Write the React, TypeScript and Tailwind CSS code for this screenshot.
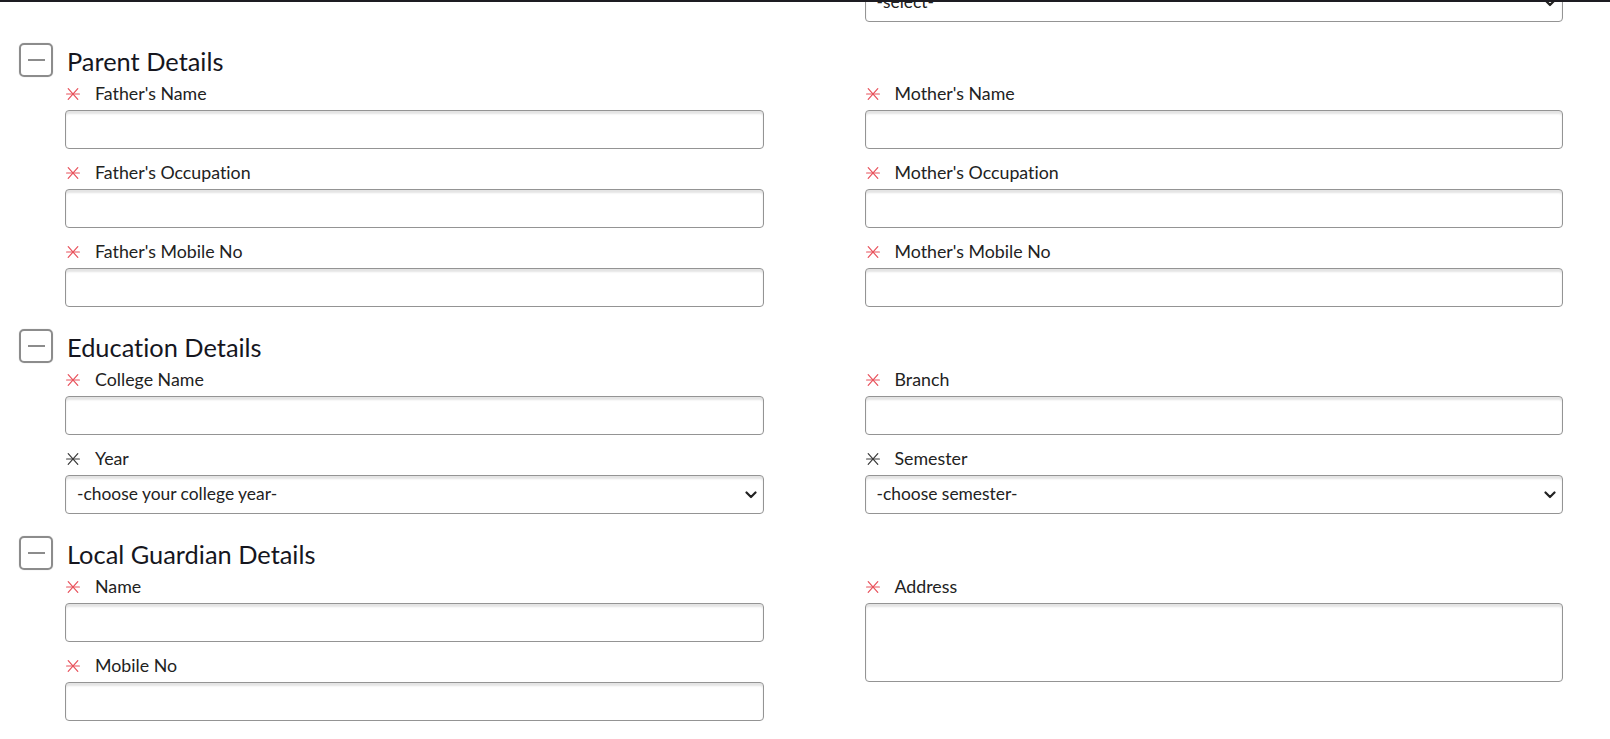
import React from "react";

type Field = {
  label: string;
  required?: boolean;
  kind?: "input" | "select" | "textarea";
  placeholder?: string;
};

function Star({ required = true }: { required?: boolean }) {
  return (
    <svg
      viewBox="0 0 14 14"
      className="w-[14px] h-[14px] shrink-0"
      stroke={required ? "#e8525c" : "#3a3a3a"}
      strokeWidth="1.2"
      strokeLinecap="round"
    >
      <line x1="0.6" y1="7" x2="13.4" y2="7" />
      <line x1="2.2" y1="1.6" x2="11.8" y2="12.4" />
      <line x1="11.8" y1="1.6" x2="2.2" y2="12.4" />
    </svg>
  );
}

function Chevron() {
  return (
    <svg
      viewBox="0 0 12 8"
      className="pointer-events-none absolute right-[7px] top-1/2 -translate-y-1/2 w-[12px] h-[8px]"
      fill="none"
      stroke="#222"
      strokeWidth="2.2"
      strokeLinecap="round"
      strokeLinejoin="round"
    >
      <path d="M1.5 1.5 6 6l4.5-4.5" />
    </svg>
  );
}

const boxBase =
  "w-full bg-white border border-[#949494] rounded-[4px] shadow-[inset_0_3px_2px_#e4e4e4] outline-none text-[#222] [font-variant-ligatures:none]";

function Control({ field }: { field: Field }) {
  if (field.kind === "select") {
    return (
      <div className="relative">
        <select
          className={`${boxBase} h-[39px] appearance-none pl-[11px] pr-8 text-[17.4px]`}
          defaultValue=""
        >
          <option value="">{field.placeholder}</option>
        </select>
        <Chevron />
      </div>
    );
  }
  if (field.kind === "textarea") {
    return <textarea className={`${boxBase} h-[79px] resize-none block text-[17.8px]`} />;
  }
  return <input type="text" className={`${boxBase} h-[39px] px-3 block text-[17.8px]`} />;
}

function FieldBlock({ field }: { field: Field }) {
  return (
    <div className="mb-[11px]">
      <label className="flex items-center h-[24px] pt-[1px] mb-[5px] text-[17.8px] text-[#222] [font-variant-ligatures:none]">
        <span className="ml-[1px] mr-[15px] flex items-center">
          <Star required={field.required !== false} />
        </span>
        {field.label}
      </label>
      <Control field={field} />
    </div>
  );
}

function SectionHeader({ title }: { title: string }) {
  return (
    <div className="flex items-center h-[34px] mb-[4px]">
      <div className="ml-[19px] w-[34px] h-[34px] rounded-[5px] border-2 border-[#8c8c8c] flex items-center justify-center shadow-[0_0_1px_#bbb]">
        <div className="w-[17px] h-[2px] bg-[#8c8c8c]" />
      </div>
      <h2 className="ml-[14px] text-[25.4px] leading-none text-[#16161e] mt-[3px] [font-variant-ligatures:none]">
        {title}
      </h2>
    </div>
  );
}

function Section({
  title,
  left,
  right,
}: {
  title: string;
  left: Field[];
  right: Field[];
}) {
  return (
    <section className="mt-[11px] first:mt-0">
      <SectionHeader title={title} />
      <div className="grid grid-cols-2 gap-x-[101px] pl-[65px] pr-[47px]">
        <div>
          {left.map((f) => (
            <FieldBlock key={f.label} field={f} />
          ))}
        </div>
        <div>
          {right.map((f) => (
            <FieldBlock key={f.label} field={f} />
          ))}
        </div>
      </div>
    </section>
  );
}

export default function App() {
  return (
    <div
      className="w-[1610px] h-[739px] overflow-hidden bg-white"
      style={{ fontFamily: "Lato, 'Noto Sans', sans-serif" }}
    >
      <div className="h-[2px] bg-[#1d1c22] relative z-10" />

      {/* tail of previous section, scrolled off the top */}
      <div className="grid grid-cols-2 gap-x-[101px] pl-[65px] pr-[47px] mt-[-19px] mb-[21px]">
        <div />
        <Control field={{ label: "", kind: "select", placeholder: "-select-" }} />
      </div>

      <Section
        title="Parent Details"
        left={[
          { label: "Father's Name" },
          { label: "Father's Occupation" },
          { label: "Father's Mobile No" },
        ]}
        right={[
          { label: "Mother's Name" },
          { label: "Mother's Occupation" },
          { label: "Mother's Mobile No" },
        ]}
      />
      <Section
        title="Education Details"
        left={[
          { label: "College Name" },
          {
            label: "Year",
            required: false,
            kind: "select",
            placeholder: "-choose your college year-",
          },
        ]}
        right={[
          { label: "Branch" },
          {
            label: "Semester",
            required: false,
            kind: "select",
            placeholder: "-choose semester-",
          },
        ]}
      />
      <Section
        title="Local Guardian Details"
        left={[{ label: "Name" }, { label: "Mobile No" }]}
        right={[{ label: "Address", kind: "textarea" }]}
      />
    </div>
  );
}
